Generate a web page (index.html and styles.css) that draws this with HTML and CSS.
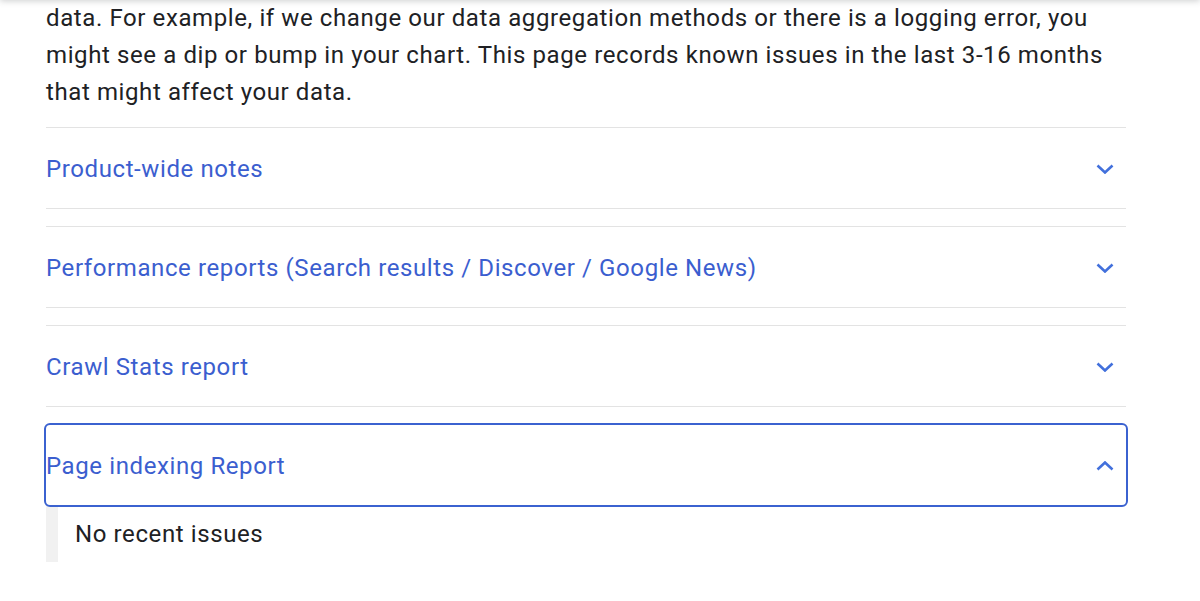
FILE: index.html
```html
<!DOCTYPE html>
<html lang="en">
<head>
    <meta charset="UTF-8">
    <meta name="viewport" content="width=device-width, initial-scale=1.0">
    <title>Data anomalies in Search Console</title>
    <link rel="stylesheet" href="styles.css">
</head>
<body>
<div class="top-shadow"></div>
<div class="page">
    <p class="intro">data. For example, if we change our data aggregation methods or there is a logging error, you might see a dip or bump in your chart. This page records known issues in the last 3-16 months that might affect your data.</p>

    <details class="expandable">
        <summary>
            <span class="title">Product-wide notes</span>
            <svg class="chevron" width="18" height="10" viewBox="0 0 18 10"><polyline points="1.5,1.5 9,8.5 16.5,1.5"/></svg>
        </summary>
    </details>

    <details class="expandable">
        <summary>
            <span class="title">Performance reports (Search results / Discover / Google News)</span>
            <svg class="chevron" width="18" height="10" viewBox="0 0 18 10"><polyline points="1.5,1.5 9,8.5 16.5,1.5"/></svg>
        </summary>
    </details>

    <details class="expandable">
        <summary>
            <span class="title">Crawl Stats report</span>
            <svg class="chevron" width="18" height="10" viewBox="0 0 18 10"><polyline points="1.5,1.5 9,8.5 16.5,1.5"/></svg>
        </summary>
    </details>

    <!-- open and focused -->
    <details class="expandable focused" open>
        <summary>
            <span class="title">Page indexing Report</span>
            <svg class="chevron" width="18" height="10" viewBox="0 0 18 10"><polyline points="1.5,1.5 9,8.5 16.5,1.5"/></svg>
        </summary>
        <div class="panel">No recent issues</div>
    </details>
</div>
</body>
</html>
```

FILE: styles.css
```css
body {
    margin: 0;
    padding: 0;
    background-color: #fff;
    font-family: Roboto, "Noto Sans", sans-serif;
    font-size: 24px;
    letter-spacing: 0.6px;
    color: #202124;
}

.top-shadow {
    position: fixed;
    top: -10px;
    left: 0;
    right: 0;
    height: 10px;
    box-shadow: 0 1px 6px rgba(60, 64, 67, 0.25);
}

.page {
    width: 1080px;
    padding: 0 46px;
}

.intro {
    margin: 0 0 16px;
    line-height: 37px;
}

.expandable {
    border-top: 1px solid #e3e3e3;
    border-bottom: 1px solid #e3e3e3;
    margin-bottom: 17px;
}

.expandable summary {
    list-style: none;
    display: flex;
    align-items: center;
    justify-content: space-between;
    height: 80px;
    padding-top: 1px;
    box-sizing: border-box;
    padding-right: 12px;
    cursor: pointer;
    color: #3b5ecf;
}

.expandable summary::-webkit-details-marker {
    display: none;
}

.chevron {
    fill: none;
    stroke: #4270dc;
    stroke-width: 2.6;
}

.expandable[open] .chevron {
    transform: rotate(180deg);
}

.focused {
    border-color: transparent;
}

.focused summary {
    outline: 2px solid #3b62d0;
    outline-offset: 0;
    border-radius: 4px;
}

.panel {
    border-left: 12px solid #f1f1f1;
    padding: 11px 0 9px 17px;
    line-height: 37px;
}
```
